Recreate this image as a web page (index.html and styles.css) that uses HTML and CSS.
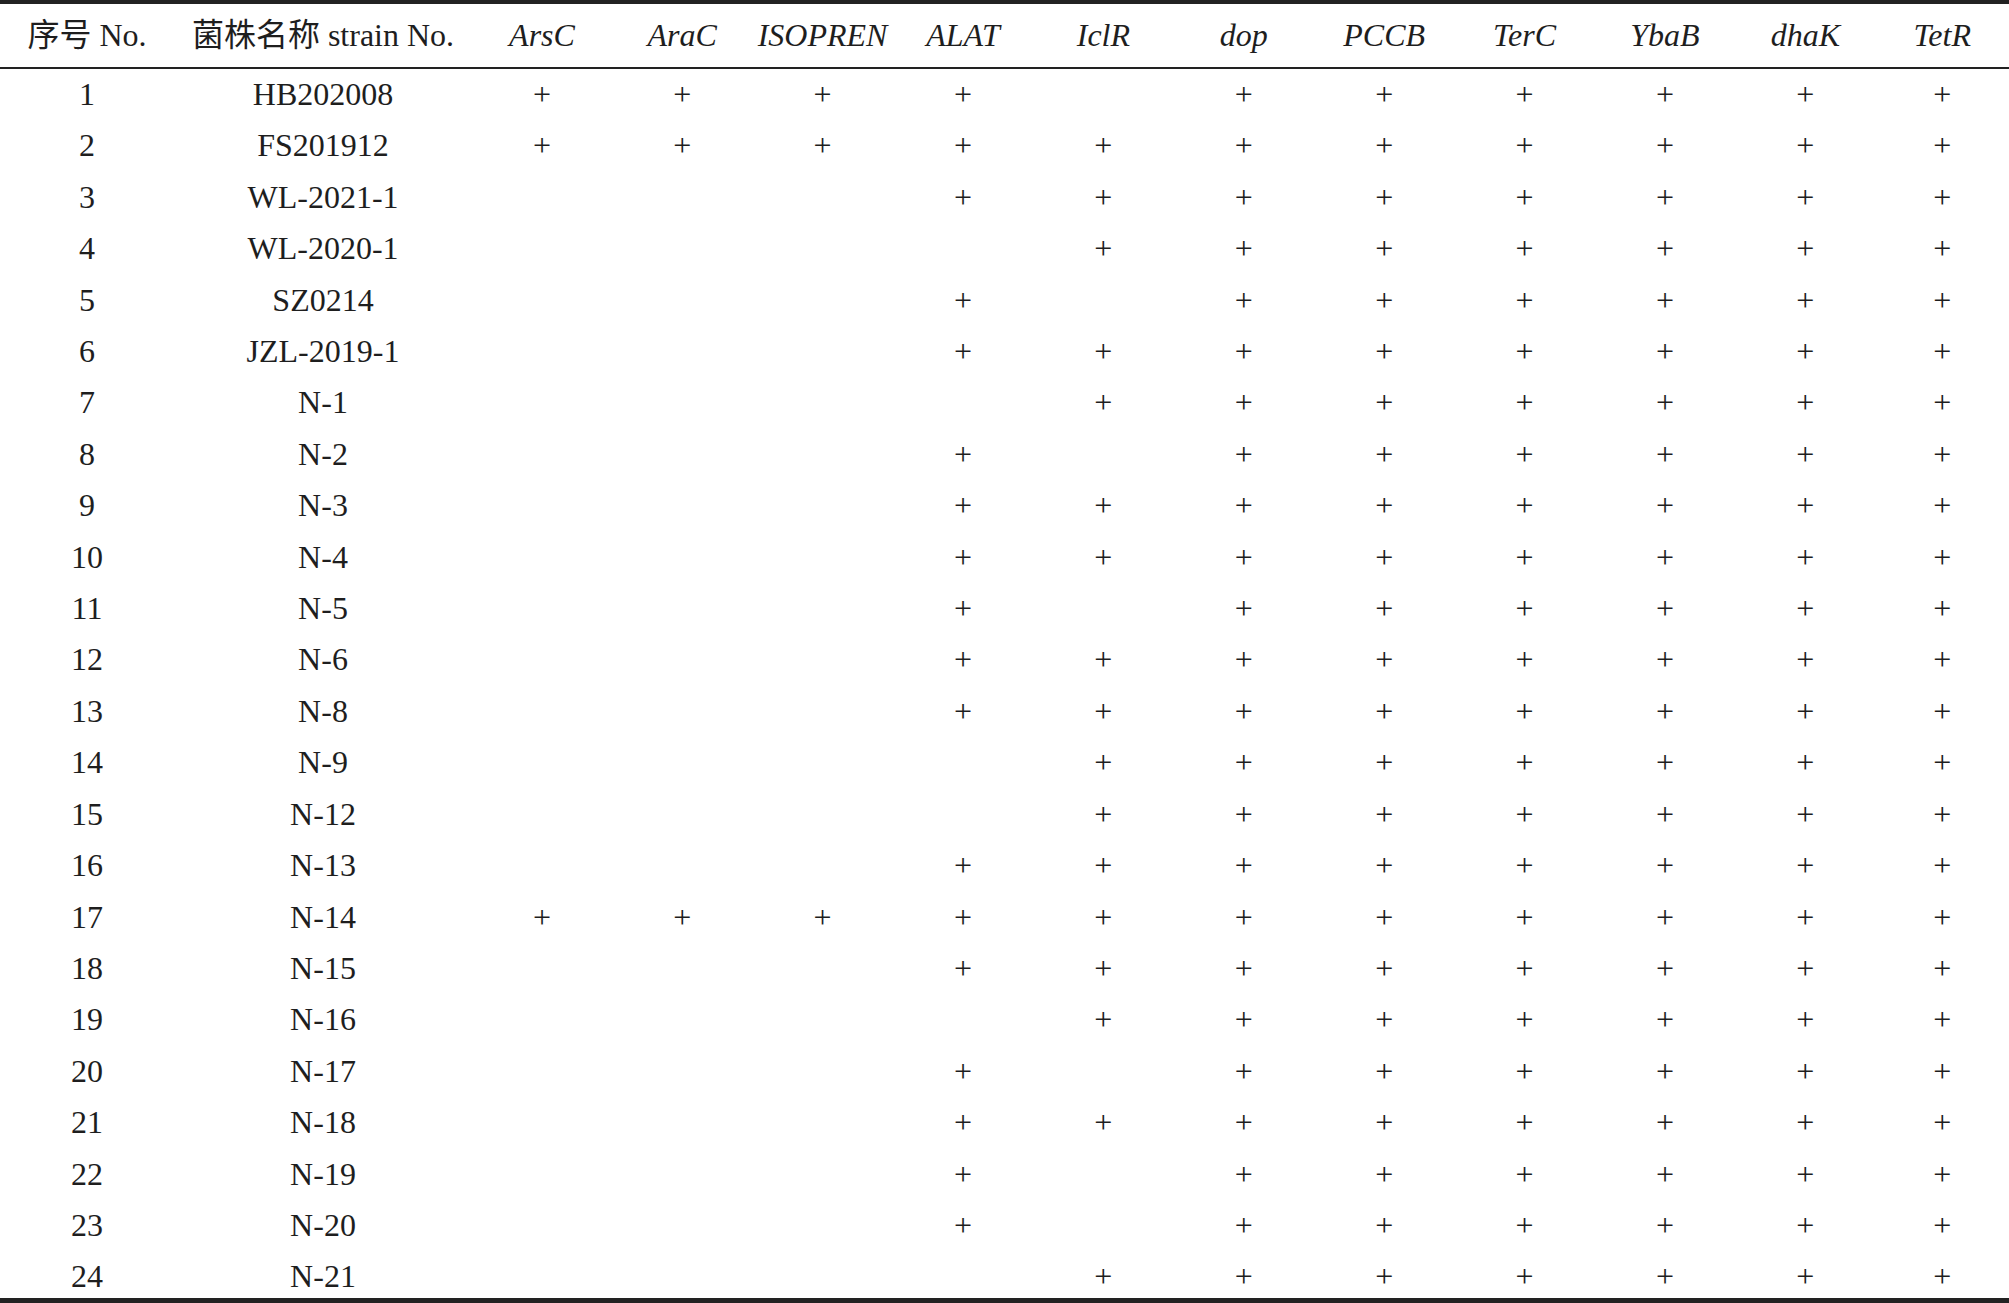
FILE: index.html
```html
<!DOCTYPE html>
<html lang="zh">
<head>
<meta charset="utf-8">
<title>菌株基因分布</title>
<link rel="stylesheet" href="styles.css">
</head>
<body>
<table class="strain-table">
  <colgroup>
    <col class="c-no"><col class="c-name"><col class="c-first">
    <col class="c-gene"><col class="c-gene"><col class="c-gene"><col class="c-gene"><col class="c-gene">
    <col class="c-gene"><col class="c-gene"><col class="c-gene"><col class="c-gene"><col class="c-last">
  </colgroup>
  <thead>
    <tr>
      <th>序号 No.</th><th>菌株名称 strain No.</th>
      <th class="gene">ArsC</th><th class="gene">AraC</th><th class="gene">ISOPREN</th><th class="gene">ALAT</th><th class="gene">IclR</th><th class="gene">dop</th><th class="gene">PCCB</th><th class="gene">TerC</th><th class="gene">YbaB</th><th class="gene">dhaK</th><th class="gene">TetR</th>
    </tr>
  </thead>
  <tbody>
    <tr><td>1</td><td>HB202008</td><td>+</td><td>+</td><td>+</td><td>+</td><td></td><td>+</td><td>+</td><td>+</td><td>+</td><td>+</td><td>+</td></tr>
    <tr><td>2</td><td>FS201912</td><td>+</td><td>+</td><td>+</td><td>+</td><td>+</td><td>+</td><td>+</td><td>+</td><td>+</td><td>+</td><td>+</td></tr>
    <tr><td>3</td><td>WL-2021-1</td><td></td><td></td><td></td><td>+</td><td>+</td><td>+</td><td>+</td><td>+</td><td>+</td><td>+</td><td>+</td></tr>
    <tr><td>4</td><td>WL-2020-1</td><td></td><td></td><td></td><td></td><td>+</td><td>+</td><td>+</td><td>+</td><td>+</td><td>+</td><td>+</td></tr>
    <tr><td>5</td><td>SZ0214</td><td></td><td></td><td></td><td>+</td><td></td><td>+</td><td>+</td><td>+</td><td>+</td><td>+</td><td>+</td></tr>
    <tr><td>6</td><td>JZL-2019-1</td><td></td><td></td><td></td><td>+</td><td>+</td><td>+</td><td>+</td><td>+</td><td>+</td><td>+</td><td>+</td></tr>
    <tr><td>7</td><td>N-1</td><td></td><td></td><td></td><td></td><td>+</td><td>+</td><td>+</td><td>+</td><td>+</td><td>+</td><td>+</td></tr>
    <tr><td>8</td><td>N-2</td><td></td><td></td><td></td><td>+</td><td></td><td>+</td><td>+</td><td>+</td><td>+</td><td>+</td><td>+</td></tr>
    <tr><td>9</td><td>N-3</td><td></td><td></td><td></td><td>+</td><td>+</td><td>+</td><td>+</td><td>+</td><td>+</td><td>+</td><td>+</td></tr>
    <tr><td>10</td><td>N-4</td><td></td><td></td><td></td><td>+</td><td>+</td><td>+</td><td>+</td><td>+</td><td>+</td><td>+</td><td>+</td></tr>
    <tr><td>11</td><td>N-5</td><td></td><td></td><td></td><td>+</td><td></td><td>+</td><td>+</td><td>+</td><td>+</td><td>+</td><td>+</td></tr>
    <tr><td>12</td><td>N-6</td><td></td><td></td><td></td><td>+</td><td>+</td><td>+</td><td>+</td><td>+</td><td>+</td><td>+</td><td>+</td></tr>
    <tr><td>13</td><td>N-8</td><td></td><td></td><td></td><td>+</td><td>+</td><td>+</td><td>+</td><td>+</td><td>+</td><td>+</td><td>+</td></tr>
    <tr><td>14</td><td>N-9</td><td></td><td></td><td></td><td></td><td>+</td><td>+</td><td>+</td><td>+</td><td>+</td><td>+</td><td>+</td></tr>
    <tr><td>15</td><td>N-12</td><td></td><td></td><td></td><td></td><td>+</td><td>+</td><td>+</td><td>+</td><td>+</td><td>+</td><td>+</td></tr>
    <tr><td>16</td><td>N-13</td><td></td><td></td><td></td><td>+</td><td>+</td><td>+</td><td>+</td><td>+</td><td>+</td><td>+</td><td>+</td></tr>
    <tr><td>17</td><td>N-14</td><td>+</td><td>+</td><td>+</td><td>+</td><td>+</td><td>+</td><td>+</td><td>+</td><td>+</td><td>+</td><td>+</td></tr>
    <tr><td>18</td><td>N-15</td><td></td><td></td><td></td><td>+</td><td>+</td><td>+</td><td>+</td><td>+</td><td>+</td><td>+</td><td>+</td></tr>
    <tr><td>19</td><td>N-16</td><td></td><td></td><td></td><td></td><td>+</td><td>+</td><td>+</td><td>+</td><td>+</td><td>+</td><td>+</td></tr>
    <tr><td>20</td><td>N-17</td><td></td><td></td><td></td><td>+</td><td></td><td>+</td><td>+</td><td>+</td><td>+</td><td>+</td><td>+</td></tr>
    <tr><td>21</td><td>N-18</td><td></td><td></td><td></td><td>+</td><td>+</td><td>+</td><td>+</td><td>+</td><td>+</td><td>+</td><td>+</td></tr>
    <tr><td>22</td><td>N-19</td><td></td><td></td><td></td><td>+</td><td></td><td>+</td><td>+</td><td>+</td><td>+</td><td>+</td><td>+</td></tr>
    <tr><td>23</td><td>N-20</td><td></td><td></td><td></td><td>+</td><td></td><td>+</td><td>+</td><td>+</td><td>+</td><td>+</td><td>+</td></tr>
    <tr class="last"><td>24</td><td>N-21</td><td></td><td></td><td></td><td></td><td>+</td><td>+</td><td>+</td><td>+</td><td>+</td><td>+</td><td>+</td></tr>
  </tbody>
</table>
</body>
</html>
```
FILE: styles.css
```css
html, body {
  margin: 0;
  padding: 0;
  background: #ffffff;
}

body {
  font-family: "Liberation Serif", "Noto Sans CJK SC", serif;
  color: #1e1e1e;
}

.strain-table {
  width: 2009px;
  table-layout: fixed;
  border-collapse: separate;
  border-spacing: 0;
  font-size: 32px;
}

.c-no { width: 174px; }
.c-name { width: 298px; }
.c-first { width: 140px; }
.c-gene { width: 140.4px; }
.c-last { width: 133.4px; }

.strain-table th,
.strain-table td {
  padding: 0;
  text-align: center;
  white-space: nowrap;
  font-weight: normal;
}

.strain-table th {
  line-height: 59px;
  border-top: 4px solid #222222;
  border-bottom: 2px solid #222222;
  padding-top: 2px;
  padding-bottom: 2px;
}

.strain-table th.gene {
  font-style: italic;
}

.strain-table td {
  line-height: 51.4px;
}

.strain-table tr.last td {
  line-height: 43px;
  padding-top: 4px;
  border-bottom: 5px solid #222222;
}
```
